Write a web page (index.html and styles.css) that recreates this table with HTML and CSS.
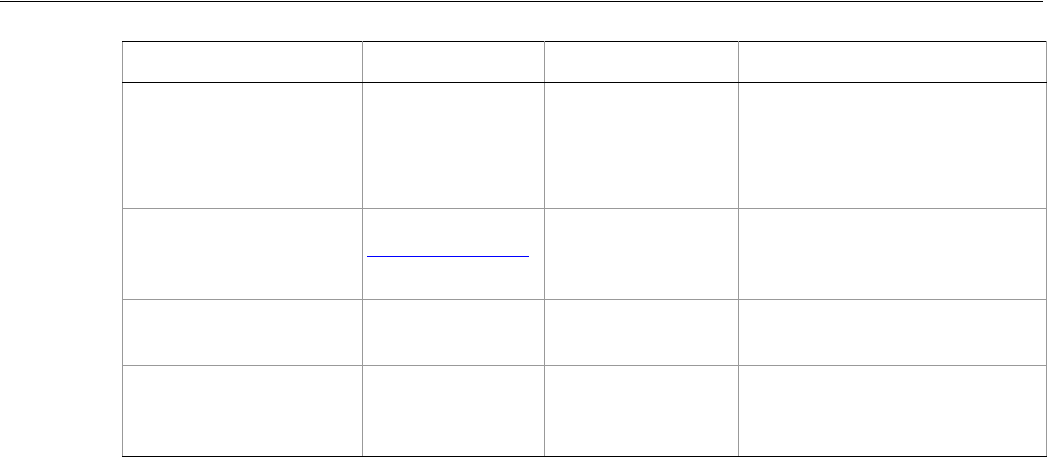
FILE: index.html
```html
<!DOCTYPE html>
<html>
<head>
<meta charset="utf-8">
<link rel="stylesheet" href="styles.css">
</head>
<body>
<div class="rule"></div>
<table class="grid">
  <colgroup>
    <col class="c1"><col class="c2"><col class="c3"><col class="c4">
  </colgroup>
  <thead>
    <tr class="head"><th></th><th></th><th></th><th></th></tr>
  </thead>
  <tbody>
    <tr class="r1"><td></td><td></td><td></td><td></td></tr>
    <tr class="r2"><td></td><td class="linkcell"><a class="link" href="#"></a></td><td></td><td></td></tr>
    <tr class="r3"><td></td><td></td><td></td><td></td></tr>
    <tr class="r4"><td></td><td></td><td></td><td></td></tr>
  </tbody>
</table>
</body>
</html>
```
FILE: styles.css
```css
html, body {
  margin: 0;
  padding: 0;
  background: #fff;
  font-family: "Liberation Sans", Arial, sans-serif;
}
.rule {
  width: 1043px;
  height: 1px;
  margin-top: 1px;
  background: #000;
}
.grid {
  border-collapse: collapse;
  margin-top: 39px;
  margin-left: 122px;
  table-layout: fixed;
  width: 924px;
}
.c1 { width: 240px; }
.c2 { width: 182px; }
.c3 { width: 194px; }
.c4 { width: 308px; }
.grid th,
.grid td {
  border: 1px solid #999;
  padding: 0 4px;
  vertical-align: middle;
  line-height: 0;
  font-size: 0;
}
.grid th {
  border-top: 1px solid #000;
  border-bottom: 1px solid #000;
}
.grid tbody tr:last-child td {
  border-bottom: 1px solid #000;
}
.head th { height: 40px; }
.r1 td { height: 125px; }
.r2 td { height: 90px; }
.r3 td { height: 65px; }
.r4 td { height: 90px; }
.link {
  display: block;
  width: 162px;
  height: 5px;
  border-bottom: 1px solid #0000ff;
}
```
